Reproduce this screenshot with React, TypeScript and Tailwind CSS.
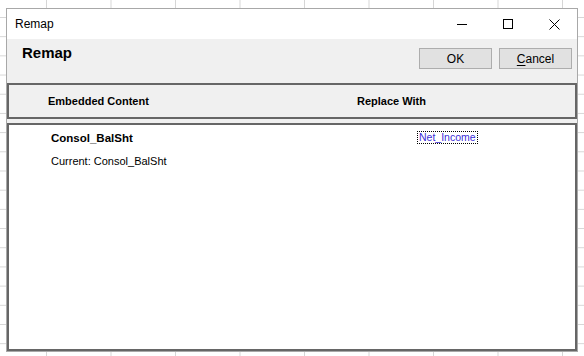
import React from 'react';

const font = { fontFamily: '"Liberation Sans", Arial, sans-serif' };

const TitleControls: React.FC = () => (
  <div className="flex items-center h-full">
    {/* minimize */}
    <div className="w-[46px] h-full flex items-center justify-center">
      <svg width="10" height="10" viewBox="0 0 10 10">
        <path d="M0 5.5h10" stroke="#000" strokeWidth="1" />
      </svg>
    </div>
    {/* maximize */}
    <div className="w-[46px] h-full flex items-center justify-center">
      <svg width="10" height="10" viewBox="0 0 10 10">
        <rect x="0.5" y="0.5" width="9" height="9" fill="none" stroke="#000" strokeWidth="1" />
      </svg>
    </div>
    {/* close */}
    <div className="w-[46px] h-full flex items-center justify-center">
      <svg width="11" height="11" viewBox="0 0 11 11">
        <path d="M0.5 0.5l10 10M10.5 0.5l-10 10" stroke="#000" strokeWidth="1" />
      </svg>
    </div>
  </div>
);

export default function App() {
  return (
    <div
      className="w-[584px] h-[356px] overflow-hidden bg-white bg-[linear-gradient(to_right,#d6d6d6_1px,transparent_1px),linear-gradient(to_bottom,#d6d6d6_1px,transparent_1px)] bg-[size:64.5px_19.2px] bg-[position:46px_17px] pl-[6px] pt-[8px]"
      style={font}
    >
      <div className="w-[572px] h-[344px] border border-[#a8a8a8] bg-[#f0f0f0] flex flex-col text-black">
        {/* Title bar */}
        <div className="h-[30px] bg-white flex items-center justify-between pl-[8px] shrink-0">
          <span className="text-[12px]">Remap</span>
          <TitleControls />
        </div>

        {/* Header */}
        <div className="h-[44px] flex items-start justify-between shrink-0">
          <h1 className="text-[15px] font-bold pl-[15px] pt-[3px]">Remap</h1>
          <div className="flex gap-[7px] pt-[9px] pr-[5px]">
            <button className="w-[73px] h-[21px] bg-[#e1e1e1] border border-[#adadad] text-[12px] flex items-center justify-center">
              OK
            </button>
            <button className="w-[73px] h-[21px] bg-[#e1e1e1] border border-[#adadad] text-[12px] flex items-center justify-center">
              <span className="underline underline-offset-2">C</span>ancel
            </button>
          </div>
        </div>

        {/* Column headers */}
        <div className="h-[36px] border-2 border-[#666666] bg-[#f0f0f0] flex items-center text-[11px] font-bold shrink-0">
          <div className="w-[348px] pl-[39px]">Embedded Content</div>
          <div>Replace With</div>
        </div>

        {/* List */}
        <div className="mt-[4px] flex-1 border-2 border-[#666666] bg-white text-[11px]">
          <div className="flex items-start pt-[6px]">
            <div className="w-[408px] pl-[42px]">
              <div className="font-bold text-[11.5px] leading-[14px]">Consol_BalSht</div>
              <div className="mt-[10px] leading-[13px]">Current: Consol_BalSht</div>
            </div>
            <span className="border border-dotted border-black text-[#3a2ed8] text-[10.5px] leading-[11px] px-[1px]">
              Net_Income
            </span>
          </div>
        </div>
      </div>
    </div>
  );
}
